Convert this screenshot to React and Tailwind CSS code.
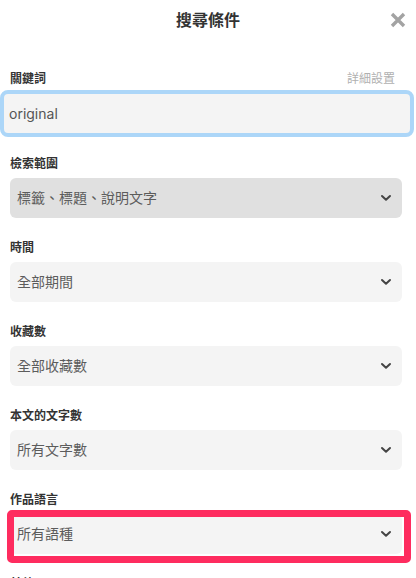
import React from "react";

const FONT = { fontFamily: 'Inter, "Noto Sans CJK TC", "Noto Sans", sans-serif' };

function Chevron() {
  return (
    <svg width="12" height="8" viewBox="0 0 12 8" className="shrink-0">
      <path d="M2 2 L6 5.8 L10 2" fill="none" stroke="#444" strokeWidth="2" strokeLinecap="round" strokeLinejoin="round" />
    </svg>
  );
}

function CloseIcon() {
  return (
    <svg width="16" height="16" viewBox="0 0 16 16">
      <path d="M2 2 L14 14 M14 2 L2 14" stroke="#a3a3a3" strokeWidth="3.4" strokeLinecap="butt" />
    </svg>
  );
}

function Select({ value, muted = false, highlight = false }) {
  return (
    <div className="relative">
      <div
        className={`flex h-[40px] items-center justify-between rounded-[6px] pl-[7px] pr-[10px] ${
          muted ? "bg-[#e0e0e0]" : "bg-[#f4f4f4]"
        }`}
      >
        <span className="text-[14px] leading-none text-[#5c5c5c]">{value}</span>
        <Chevron />
      </div>
      {highlight && (
        <div className="pointer-events-none absolute left-[-3px] right-[-9px] top-[-4px] bottom-[-9px] rounded-[5px] border-[7px] border-[#fe2c5f]" />
      )}
    </div>
  );
}

function Field({ label, value, muted, highlight }) {
  return (
    <div className="mt-[22px] first:mt-0">
      <div className="flex h-[16px] items-center text-[12px] font-bold text-[#333]">{label}</div>
      <div className="mt-[6px]">
        <Select value={value} muted={muted} highlight={highlight} />
      </div>
    </div>
  );
}

export default function App() {
  return (
    <div style={FONT} className="h-[578px] w-[416px] overflow-hidden bg-white">
      <header className="relative flex h-[40px] items-center justify-center">
        <h1 className="text-[16px] font-bold text-[#333]">搜尋條件</h1>
        <button className="absolute right-[10px] top-[12px]" aria-label="close">
          <CloseIcon />
        </button>
      </header>

      <div className="pl-[10px] pr-[14px]">
        <div className="mt-[31px] flex h-[16px] items-center justify-between">
          <span className="text-[12px] font-bold text-[#333]">關鍵詞</span>
          <span className="mr-[7px] text-[12px] text-[#b0b0b0]">詳細設置</span>
        </div>
        <div className="ml-[-10px] mr-[-12px] mt-[3px] flex h-[47px] items-center rounded-[8px] border-4 border-[#acd6f8] bg-[#f4f4f4] pl-[5px]">
          <span className="text-[14px] text-[#555]">original</span>
        </div>

        <div className="mt-[19px]">
          <Field label="檢索範圍" value="標籤、標題、說明文字" muted />
          <Field label="時間" value="全部期間" />
          <Field label="收藏數" value="全部收藏數" />
          <Field label="本文的文字數" value="所有文字數" />
          <Field label="作品語言" value="所有語種" highlight />
          <Field label="其他" value="" />
        </div>
      </div>
    </div>
  );
}
